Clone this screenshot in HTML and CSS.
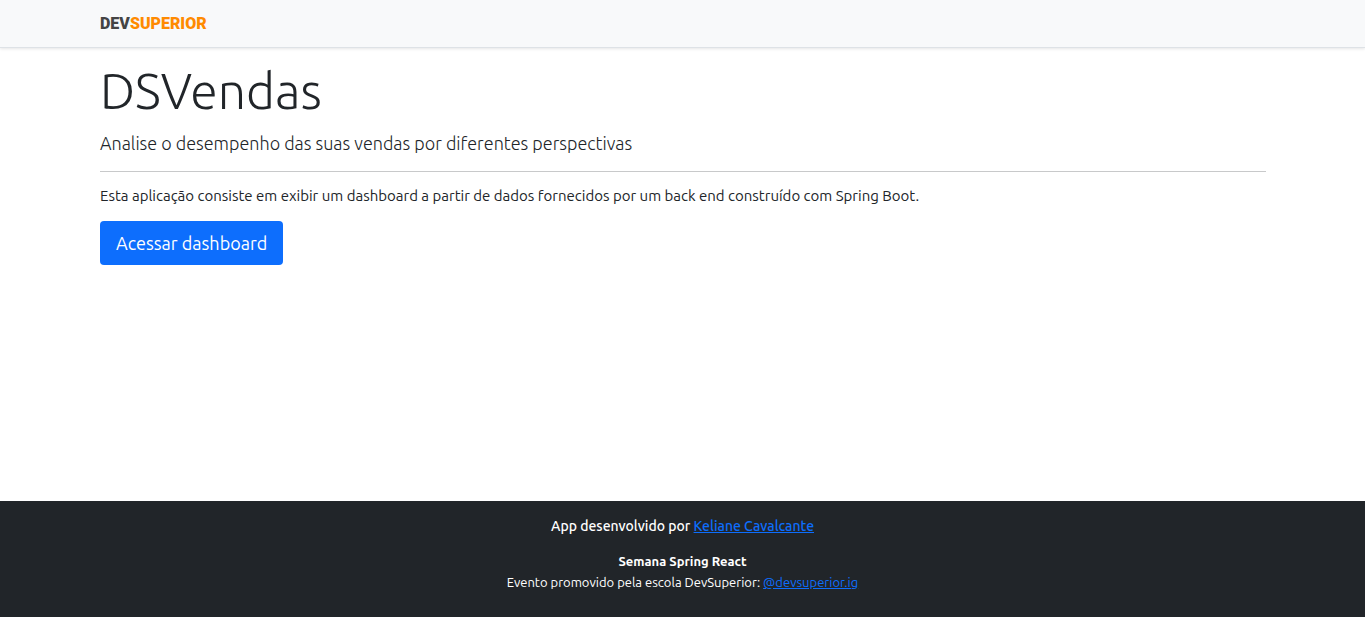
FILE: index.html
```html
<!DOCTYPE html>
<html lang="pt-BR">
<head>
<meta charset="utf-8">
<meta name="viewport" content="width=device-width, initial-scale=1">
<title>DSVendas</title>
<link rel="stylesheet" href="styles.css">
</head>
<body>
<header class="navbar">
  <div class="container">
    <span class="brand"><span class="brand-dev">DEV</span><span class="brand-superior">SUPERIOR</span></span>
  </div>
</header>
<main class="container hero">
  <h1 class="title">DSVendas</h1>
  <p class="lead">Analise o desempenho das suas vendas por diferentes perspectivas</p>
  <hr class="divider">
  <p class="text">Esta aplicação consiste em exibir um dashboard a partir de dados fornecidos por um back end construído com Spring Boot.</p>
  <a class="button" href="#dashboard">Acessar dashboard</a>
</main>
<footer class="footer">
  <p class="author">App desenvolvido por <a href="#author">Keliane Cavalcante</a></p>
  <p class="event"><strong>Semana Spring React</strong><br>Evento promovido pela escola DevSuperior: <a href="#instagram">@devsuperior.ig</a></p>
</footer>
</body>
</html>
```
FILE: styles.css
```css
* { box-sizing: border-box; }
body {
  margin: 0;
  min-height: 100vh;
  display: flex;
  flex-direction: column;
  background: #fff;
  color: #212529;
  font-family: Ubuntu, "Open Sans", "Noto Sans", sans-serif;
}
.container {
  width: 100%;
  padding: 0 99px 0 100px;
}
.navbar {
  padding: 12px 0 11px;
  background: #f8f9fa;
  border-bottom: 1px solid #dee2e6;
  box-shadow: 0 1px 3px rgba(0, 0, 0, 0.1);
}
.brand {
  display: block;
  font-family: Roboto, sans-serif;
  font-size: 16px;
  line-height: 24px;
  font-weight: 900;
}
.brand-dev { color: #444; }
.brand-superior { color: #ff8a00; }
.hero { flex: 1; padding-top: 12px; }
.title {
  margin: 0 0 11px;
  font-size: 50px;
  line-height: 60px;
  font-weight: 300;
}
.lead {
  margin: 0;
  font-size: 18px;
  line-height: 24px;
  font-weight: 300;
}
.divider {
  margin: 16px 0 14px;
  border: 0;
  border-top: 1px solid #c8c9ca;
}
.text {
  margin: 0 0 15px;
  font-size: 15px;
  line-height: 20px;
}
.button {
  display: inline-block;
  padding: 8px 16px;
  border-radius: 4px;
  background: #0d6efd;
  color: #fff;
  font-size: 18px;
  line-height: 28px;
  text-decoration: none;
}
.footer {
  padding: 15px 16px 24px;
  background: #212529;
  color: #fff;
  text-align: center;
}
.footer a { color: #0d6efd; }
.author { margin: 0 0 15px; font-size: 14px; line-height: 20px; font-weight: 500; }
.event { margin: 0; font-size: 13px; line-height: 21px; }
```
